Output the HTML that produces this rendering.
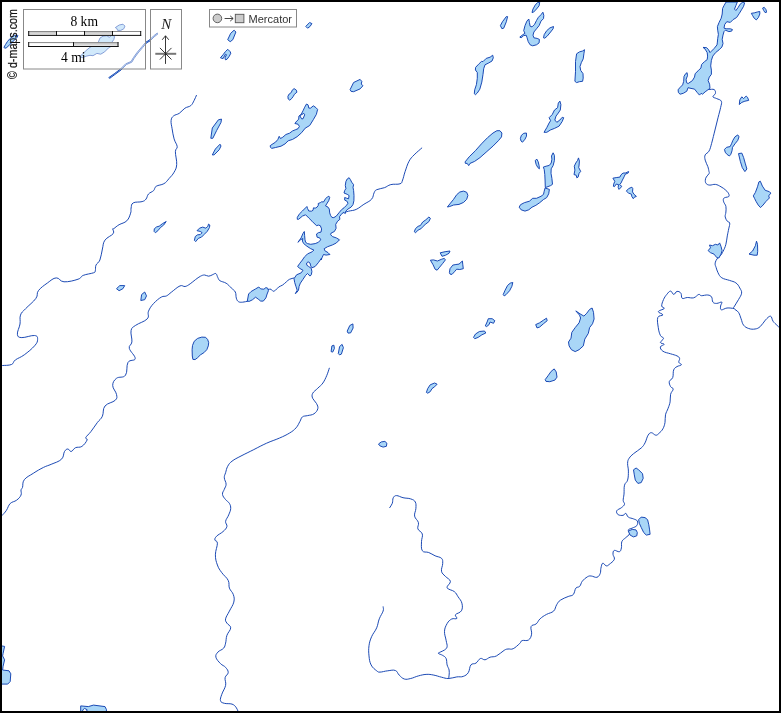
<!DOCTYPE html>
<html><head><meta charset="utf-8"><title>d-maps</title>
<style>
html,body{margin:0;padding:0;background:#fff;}
body{width:781px;height:713px;overflow:hidden;position:relative;}
svg{will-change:transform;position:absolute;left:0;top:0;display:block;}
</style></head><body>
<svg width="781" height="713" viewBox="0 0 781 713">
<rect x="0" y="0" width="781" height="713" fill="#fff"/>
<g fill="none" stroke="#1040b0" stroke-width="0.95" stroke-linejoin="round" stroke-linecap="round">
<path d="M196.4 95.4 C195.9 96.4 195.2 98.5 194.1 100.5 C193.0 102.5 192.6 104.1 190.8 105.6 C189.0 107.1 187.2 106.7 184.9 108.2 C182.6 109.7 181.6 111.8 179.3 113.3 C177.0 114.8 175.2 114.5 173.6 115.9 C172.0 117.3 171.4 117.9 171.1 120.5 C170.8 123.1 171.5 125.0 172.1 128.7 C172.7 132.4 173.1 135.3 174.1 138.9 C175.1 142.5 176.9 144.0 177.2 146.6 C177.5 149.2 175.5 148.1 175.4 151.7 C175.3 155.3 177.0 160.4 176.7 164.5 C176.4 168.6 175.6 169.4 174.1 172.2 C172.6 175.0 171.0 176.3 169 178.6 C167.0 180.9 166.5 182.2 163.9 183.7 C161.3 185.2 158.3 184.9 156.2 186.3 C154.1 187.7 155.1 189.1 153.6 190.6 C152.1 192.1 150.0 192.3 148.5 194 C147.0 195.7 147.3 197.6 146 199.1 C144.7 200.6 144.7 200.8 142.1 201.6 C139.5 202.4 135.4 201.6 133.2 202.9 C131.0 204.2 131.6 205.9 131.1 208 C130.6 210.1 131.5 210.6 130.6 213.2 C129.7 215.8 129.1 218.5 126.8 220.8 C124.5 223.1 121.7 223.2 119.1 224.7 C116.5 226.2 115.3 227.6 114 228.5 C112.7 229.4 112.9 228.0 112.7 229 C112.5 230.0 114.7 231.4 113.2 233.6 C111.7 235.8 107.2 237.0 105 240.1 C102.8 243.2 103.4 245.0 102.4 249 C101.4 253.0 101.2 256.8 99.9 260 C98.6 263.2 96.9 262.9 96 265.1 C95.1 267.3 95.8 269.3 95.3 270.8 C94.8 272.3 95.9 271.9 93.5 272.8 C91.1 273.7 86.3 274.1 83.2 275.4 C80.1 276.7 81.9 277.9 78.1 279.2 C74.3 280.5 68.4 282.1 64 281.8 C59.6 281.5 59.6 277.7 56.3 277.9 C53.0 278.1 51.0 280.4 47.4 283 C43.8 285.6 40.7 287.6 38.4 290.7 C36.1 293.8 38.5 294.8 35.9 298.4 C33.3 302.0 28.7 305.4 25.6 308.7 C22.5 312.0 21.6 312.0 20.5 315.1 C19.4 318.2 20.6 320.2 20 324 C19.4 327.8 17.0 331.6 17.4 334.3 C17.8 337.0 18.4 337.4 21.8 337.6 C25.2 337.8 31.4 335.1 34.6 335.5 C37.8 335.9 37.6 337.3 37.6 339.4 C37.6 341.5 37.3 342.7 34.6 345.8 C31.9 348.9 28.1 352.0 24.3 354.8 C20.5 357.6 18.0 358.0 15.4 359.9 C12.8 361.8 14.1 363.4 11.5 364.5 C8.9 365.6 4.4 365.3 2.6 365.5"/>
<path d="M247.6 301.2 C246.6 301.4 244.3 302.1 242.5 302.2 C240.7 302.3 239.6 302.4 238.4 301.6 C237.2 300.8 236.9 300.0 236.3 298.1 C235.7 296.2 236.3 294.0 235.3 292 C234.3 290.0 233.0 289.7 231.2 287.9 C229.4 286.1 228.4 284.6 226.1 283.2 C223.8 281.8 221.5 281.8 219.9 280.7 C218.3 279.6 218.7 279.1 217.9 277.7 C217.1 276.3 216.9 274.2 215.9 273.6 C214.9 273.0 214.2 274.1 212.8 274.6 C211.4 275.1 210.3 276.1 208.7 276.2 C207.1 276.3 206.2 275.0 204.6 275 C203.0 275.0 202.3 275.3 200.5 276.2 C198.7 277.1 197.5 278.2 195.4 279.7 C193.3 281.2 192.3 282.4 190.2 283.8 C188.1 285.2 187.1 286.1 185.1 286.5 C183.1 286.9 182.7 284.8 180 285.9 C177.3 287.0 174.3 290.0 171.6 292 C168.9 294.0 168.6 294.9 166.5 295.9 C164.4 296.9 163.9 295.6 161.3 297.1 C158.7 298.6 156.2 300.7 153.6 303.5 C151.0 306.3 149.8 308.1 148.5 311.2 C147.2 314.3 149.8 316.1 147.2 318.9 C144.6 321.7 138.9 323.0 135.7 325.3 C132.5 327.6 131.9 327.1 131.1 330.4 C130.3 333.7 132.3 338.3 131.9 341.9 C131.5 345.5 128.6 345.0 129.3 348.3 C130.0 351.6 135.5 355.8 135.2 358.6 C134.9 361.4 129.9 359.1 128 362.4 C126.1 365.7 127.8 372.0 125.5 375.2 C123.2 378.4 119.1 376.2 116.5 378.3 C113.9 380.4 112.7 382.3 112.7 385.5 C112.7 388.7 116.0 391.4 116.5 394.4 C117.0 397.4 117.5 398.0 115.2 400.3 C112.9 402.6 107.6 402.8 105 406 C102.4 409.2 103.9 412.9 102.4 416.2 C100.9 419.5 99.6 419.5 97.3 422.6 C95.0 425.7 93.2 428.6 90.9 431.6 C88.6 434.6 86.6 435.8 85.8 437.5 C85.0 439.2 87.9 438.2 87.1 440 C86.3 441.8 84.2 444.9 81.9 446.4 C79.6 447.9 77.6 446.7 75.5 447.7 C73.4 448.7 72.7 451.2 71.2 451.5 C69.7 451.8 69.2 449.0 67.9 449 C66.6 449.0 65.8 449.5 64.5 451.5 C63.2 453.5 64.2 456.6 61.5 459.2 C58.8 461.8 54.8 462.7 51.2 464.3 C47.6 465.9 47.1 465.6 43.5 467.4 C39.9 469.2 37.1 470.8 33.3 473.3 C29.5 475.8 26.5 476.9 24.3 479.7 C22.1 482.5 23.2 485.4 22.5 487.4 C21.8 489.4 21.3 488.4 21 489.9 C20.7 491.4 21.9 493.0 21 495.1 C20.1 497.2 18.8 498.5 16.6 500.2 C14.4 501.9 12.2 501.5 10.2 503.5 C8.2 505.5 8.0 508.0 6.4 510.4 C4.8 512.8 2.9 514.5 2 515.5"/>
<path d="M268.4 289.5 C268.9 289.4 270.1 288.9 271 289.2 C271.9 289.5 272.0 291.0 272.9 291.2 C273.8 291.4 274.3 291.0 275.5 290.2 C276.7 289.4 277.3 288.0 278.7 287 C280.1 286.0 281.0 286.1 282.5 285.1 C284.0 284.1 284.9 283.1 286.3 281.9 C287.7 280.7 288.0 280.1 289.5 279.3 C291.0 278.5 293.1 278.3 294 278"/>
<path d="M341.4 213.3 C342.8 212.9 345.5 212.0 348.5 211.2 C351.5 210.4 353.1 210.8 356.2 209.4 C359.3 208.0 360.8 206.3 363.9 204.3 C367.0 202.3 369.6 201.5 371.6 199.2 C373.6 196.9 373.1 194.7 374.1 192.8 C375.1 190.9 374.6 190.7 376.7 189.7 C378.8 188.7 381.6 188.7 384.4 187.7 C387.2 186.7 387.7 185.4 390.8 184.6 C393.9 183.8 397.6 184.7 400 183.8 C402.4 182.9 401.6 182.4 402.6 180 C403.6 177.6 403.8 175.3 405.1 171.6 C406.4 167.9 407.2 164.6 409 161.3 C410.8 158.0 411.5 157.6 414.1 154.9 C416.7 152.2 420.3 149.4 421.8 148"/>
<path d="M329.3 368.2 C328.8 369.6 328.1 372.4 326.8 375.4 C325.5 378.4 324.7 380.4 322.9 383 C321.1 385.6 319.8 386.1 317.8 388.2 C315.8 390.3 313.7 391.3 312.7 393.3 C311.7 395.3 311.9 396.4 312.7 398.4 C313.5 400.4 315.5 401.4 316.5 403.5 C317.5 405.6 318.3 406.6 317.8 408.7 C317.3 410.8 316.0 412.4 314 413.8 C312.0 415.2 309.9 415.0 307.6 415.6 C305.3 416.2 303.9 415.7 302.4 416.9 C300.9 418.1 301.2 419.3 299.9 421.5 C298.6 423.7 298.1 425.6 296 427.9 C293.9 430.2 292.9 431.0 289.6 433 C286.3 435.0 284.0 436.1 279.4 438.1 C274.8 440.1 271.7 440.9 266.6 443.2 C261.5 445.5 258.9 447.0 253.8 449.6 C248.7 452.2 245.4 453.7 241 456 C236.6 458.3 234.7 459.1 232 461.2 C229.3 463.3 229.0 464.0 227.7 466.3 C226.4 468.6 226.3 470.4 225.6 472.7 C224.9 475.0 224.2 475.5 224.3 477.8 C224.4 480.1 226.1 481.9 226.1 484.2 C226.1 486.5 225.0 487.3 224.3 489.3 C223.6 491.3 222.2 492.3 222.5 494.4 C222.8 496.5 224.2 497.8 225.6 499.6 C227.0 501.4 228.4 501.6 229.4 503.4 C230.4 505.2 230.8 506.2 230.7 508.5 C230.6 510.8 229.7 512.3 228.7 514.9 C227.7 517.5 226.0 519.0 225.6 521.3 C225.2 523.6 227.4 524.4 226.9 526.5 C226.4 528.6 225.1 529.7 223 531.6 C220.9 533.5 218.2 534.5 216.6 536.2 C215.0 537.9 214.7 538.6 214.9 540 C215.1 541.4 217.3 540.2 217.4 543.2 C217.5 546.2 215.4 550.4 215.4 554.8 C215.4 559.2 216.1 561.4 217.4 565 C218.7 568.6 219.6 569.6 221.8 572.7 C224.0 575.8 226.7 577.3 228.2 580.4 C229.7 583.5 228.4 585.3 229.4 588.1 C230.4 590.9 232.4 591.7 233.3 594.5 C234.2 597.3 234.6 598.8 233.8 602.1 C233.0 605.4 231.0 607.8 229.4 611.1 C227.8 614.4 226.1 616.4 225.6 618.8 C225.1 621.2 225.9 621.3 226.9 623.1 C227.9 624.9 230.7 625.3 230.7 627.8 C230.7 630.3 227.9 632.3 226.9 635.4 C225.9 638.5 226.3 640.5 225.6 643.1 C224.9 645.7 225.1 646.4 223.6 648.2 C222.1 650.0 219.4 650.3 217.9 652.1 C216.4 653.9 215.4 654.9 215.9 657.2 C216.4 659.5 218.6 661.6 220.5 663.6 C222.4 665.6 224.1 665.6 225.6 667.4 C227.1 669.2 228.3 670.5 228.2 672.6 C228.1 674.7 225.6 675.1 225.1 677.7 C224.6 680.3 226.3 682.1 225.6 685.4 C224.9 688.7 222.8 691.2 221.8 694.3 C220.8 697.4 220.0 698.9 220.5 700.7 C221.0 702.5 222.0 702.6 224.3 703.3 C226.6 704.0 229.7 703.3 232 704.1 C234.3 704.9 234.7 705.7 235.9 707.1 C237.1 708.5 237.5 710.2 237.9 711"/>
<path d="M389.7 507.6 C390.2 506.7 391.6 505.3 392.3 503.3 C393.0 501.3 392.4 499.2 393.3 497.7 C394.2 496.2 394.7 495.6 396.6 495.6 C398.5 495.6 400.2 497.0 403 497.7 C405.8 498.4 408.2 498.0 410.7 498.9 C413.2 499.8 414.3 500.1 415.3 502 C416.3 503.9 416.0 505.6 415.9 508.4 C415.8 511.2 414.1 513.3 414.6 516.1 C415.1 518.9 417.7 519.9 418.4 522.5 C419.1 525.1 417.1 526.6 417.9 528.9 C418.7 531.2 421.6 531.4 422.3 534 C423.0 536.6 421.5 538.4 421.5 541.7 C421.5 545.0 420.9 548.5 422.3 550.7 C423.7 552.9 426.1 551.5 428.7 552.5 C431.3 553.5 432.5 554.6 435.1 555.8 C437.7 557.0 440.0 556.8 441.5 558.3 C443.0 559.8 442.7 560.9 442.7 563.5 C442.7 566.1 441.0 568.6 441.5 571.2 C442.0 573.8 443.5 574.3 445.3 576.3 C447.1 578.3 450.0 579.1 450.4 581.4 C450.8 583.7 446.3 585.8 447.1 587.8 C447.9 589.8 452.1 589.8 454.3 591.6 C456.5 593.4 456.6 594.5 458.1 596.8 C459.6 599.1 461.2 600.4 461.9 603.2 C462.6 606.0 462.7 608.5 461.4 610.8 C460.1 613.1 456.4 613.2 455.5 614.7 C454.6 616.2 457.6 617.6 456.8 618.5 C456.0 619.4 453.6 618.0 451.7 619 C449.8 620.0 448.5 621.1 447.1 623.6 C445.7 626.1 444.7 628.0 444.5 631.3 C444.3 634.6 445.6 637.2 446.1 640.3 C446.6 643.4 447.4 644.8 447.1 646.7 C446.8 648.6 445.9 648.9 444.5 650 C443.1 651.1 441.4 651.4 440.2 652.1 C439.0 652.8 437.9 652.7 438.4 653.4 C438.9 654.1 441.2 654.4 442.7 655.4 C444.2 656.4 445.2 656.6 446.1 658.5 C447.0 660.4 446.5 662.6 447.1 664.9 C447.7 667.2 448.7 668.0 449.1 670 C449.5 672.0 449.2 673.4 449.1 675.1 C449.0 676.8 448.7 677.8 448.6 678.5"/>
<path d="M383.1 606.8 C383.1 607.7 383.9 608.7 383.1 611.1 C382.3 613.5 380.6 615.5 379.3 618.8 C378.0 622.1 378.2 624.2 376.7 627.8 C375.2 631.4 373.1 633.1 371.6 636.7 C370.1 640.3 369.5 641.9 369 645.7 C368.5 649.5 368.6 652.1 369 655.9 C369.4 659.7 369.6 661.9 371.1 664.9 C372.6 667.9 374.9 669.4 376.7 670.8 C378.5 672.2 377.8 672.1 380 672.1 C382.2 672.1 384.6 671.1 387.7 670.8 C390.8 670.5 393.1 669.6 395.4 670.5 C397.7 671.4 397.4 673.4 399.2 675.1 C401.0 676.8 402.0 678.3 404.3 679 C406.6 679.7 407.9 679.1 410.7 678.5 C413.5 677.9 415.3 676.7 418.4 675.9 C421.5 675.1 423.0 674.6 426.1 674.4 C429.2 674.2 430.7 674.5 433.8 675.1 C436.9 675.7 438.5 676.5 441.5 677.2 C444.5 677.9 445.5 678.6 448.6 678.5 C451.7 678.4 453.9 677.3 456.8 676.9 C459.7 676.5 460.9 677.3 463.2 676.4 C465.5 675.5 466.8 674.9 468.3 672.6 C469.8 670.3 469.4 666.8 470.9 664.9 C472.4 663.0 474.1 664.4 476 663.1 C477.9 661.8 478.6 659.2 480.4 658.5 C482.2 657.8 483.1 660.1 485 659.8 C486.9 659.5 487.8 658.0 490.1 657.2 C492.4 656.4 493.7 657.3 496.5 655.9 C499.3 654.5 501.9 651.7 504.2 650.3 C506.5 648.9 506.2 649.3 508 649 C509.8 648.7 510.9 649.8 513.2 648.7 C515.5 647.6 517.8 645.2 519.6 643.6 C521.4 642.0 520.3 641.3 522.1 640.6 C523.9 639.9 526.6 641.3 528.5 640 C530.4 638.7 531.1 636.9 531.6 634.2 C532.1 631.5 530.2 628.6 531.1 626.5 C532.0 624.4 534.4 625.4 536.2 623.9 C538.0 622.4 538.0 620.7 540.1 618.8 C542.2 616.9 543.8 615.9 546.5 614.4 C549.2 612.9 551.6 613.0 553.6 611.1 C555.6 609.2 555.3 606.9 556.7 604.7 C558.1 602.5 558.2 601.7 560.5 600.1 C562.8 598.5 565.6 597.6 568.2 596.5 C570.8 595.4 571.8 596.2 573.3 594.5 C574.8 592.8 574.6 589.7 575.9 588.1 C577.2 586.5 578.4 587.7 579.7 586.3 C581.0 584.9 580.8 583.1 582.3 581.2 C583.8 579.3 585.6 577.8 587.4 576.8 C589.2 575.8 589.3 575.9 591.2 576 C593.1 576.1 595.1 577.8 596.9 577.3 C598.7 576.8 599.4 575.3 600.2 573.5 C601.0 571.7 600.4 570.4 600.9 568.3 C601.4 566.2 601.7 563.7 602.7 563.2 C603.7 562.7 604.8 565.5 606.1 565.8 C607.4 566.1 607.5 565.8 609.1 564.5 C610.7 563.2 613.5 561.4 614.3 559.4 C615.1 557.4 613.0 556.1 613 554.3 C613.0 552.5 613.0 550.9 614.3 550.4 C615.6 549.9 618.0 552.2 619.4 551.7 C620.8 551.2 620.9 549.9 621.4 547.9 C621.9 545.9 621.0 543.6 621.9 541.5 C622.8 539.4 624.3 539.1 625.8 537.6 C627.3 536.1 629.1 535.3 629.6 533.8 C630.1 532.3 627.8 531.0 628.3 529.9 C628.8 528.8 630.5 529.0 632.2 528.1 C633.9 527.2 635.8 527.0 636.8 525.6 C637.8 524.2 638.0 522.3 637.3 521 C636.6 519.7 635.3 519.7 633.5 518.9 C631.7 518.1 629.8 518.2 628.3 517.1 C626.8 516.0 626.8 513.7 625.8 513.3 C624.8 512.9 624.7 515.0 623.2 515.3 C621.7 515.6 619.4 515.5 618.1 514.6 C616.8 513.7 616.1 512.1 616.8 510.7 C617.5 509.3 619.9 509.0 621.4 507.7 C622.9 506.4 624.1 505.7 624.5 504.3 C624.9 502.9 623.3 502.5 623.2 500.5 C623.1 498.5 623.7 497.2 624 494.1 C624.3 491.0 623.8 488.0 624.5 485.2 C625.2 482.4 626.8 482.9 627.6 480.1 C628.4 477.3 628.4 474.4 628.4 471.1 C628.4 467.8 627.5 466.0 627.6 463.4 C627.7 460.8 627.9 460.2 629.1 458.3 C630.3 456.4 631.1 455.8 633.5 453.7 C635.9 451.6 638.9 450.2 641.2 448 C643.5 445.8 643.6 445.5 645 442.9 C646.4 440.3 646.8 437.2 648.1 435.2 C649.4 433.2 649.9 432.7 651.4 432.7 C652.9 432.7 654.3 435.1 655.8 435.2 C657.3 435.3 657.7 434.5 659.1 433.2 C660.5 431.9 661.7 431.0 662.9 428.8 C664.1 426.6 664.5 425.2 665 422.4 C665.5 419.6 664.9 417.6 665.5 414.8 C666.1 412.0 667.2 410.9 668.1 408.3 C669.0 405.7 669.6 404.7 670.1 401.9 C670.6 399.1 670.0 396.9 670.6 394.3 C671.2 391.7 673.2 390.6 673.2 389.1 C673.2 387.6 671.4 388.1 670.6 386.6 C669.8 385.1 668.9 383.3 669.3 381.5 C669.7 379.7 671.8 379.9 672.7 377.6 C673.6 375.3 672.8 372.1 673.7 369.9 C674.6 367.7 675.5 367.6 677 366.6 C678.5 365.6 681.0 365.7 681.4 364.8 C681.8 363.9 679.2 363.6 678.8 362.3 C678.4 361.0 680.0 359.7 679.6 358.4 C679.2 357.1 678.8 356.8 677 355.9 C675.2 355.0 673.4 354.7 670.6 353.8 C667.8 352.9 664.9 352.6 662.9 351.2 C660.9 349.8 660.1 348.3 660.4 346.9 C660.7 345.5 664.2 345.2 664.2 344.3 C664.2 343.4 660.5 343.7 660.4 342.5 C660.3 341.3 663.5 339.8 663.5 338.4 C663.5 337.0 661.4 337.5 660.4 335.4 C659.4 333.3 658.8 331.3 658.3 327.7 C657.8 324.1 656.9 320.1 657.8 317.5 C658.7 314.9 662.8 316.1 662.9 314.9 C663.0 313.7 658.0 312.9 658.3 311.6 C658.6 310.3 663.5 309.6 664.2 308.5 C664.9 307.4 661.8 307.8 661.7 306 C661.6 304.2 662.5 301.9 663.5 299.6 C664.5 297.3 665.4 296.1 666.8 294.4 C668.2 292.7 669.2 291.1 670.6 291.1 C672.0 291.1 672.4 294.3 673.7 294.4 C675.0 294.5 675.6 291.6 677 291.4 C678.4 291.2 679.9 291.8 680.9 293.2 C681.9 294.6 680.9 297.4 682.2 298.3 C683.5 299.2 685.0 297.6 687.3 297.5 C689.6 297.4 691.4 298.4 693.7 297.8 C696.0 297.2 697.3 294.8 698.8 294.4 C700.3 294.0 699.6 295.6 701.4 295.7 C703.2 295.8 705.8 294.7 707.8 295 C709.8 295.3 710.6 295.6 711.6 297 C712.6 298.4 711.9 300.8 712.9 302.1 C713.9 303.4 714.9 303.4 716.7 303.4 C718.5 303.4 721.0 301.6 721.8 302.1 C722.6 302.6 720.7 304.5 720.6 306 C720.5 307.5 720.0 309.4 721.3 309.8 C722.6 310.2 724.5 308.3 727 308 C729.5 307.7 732.5 308.4 733.9 308.5"/>
<path d="M709 89.6 C710.0 89.6 712.9 88.8 714.2 89.6 C715.5 90.4 715.7 92.1 715.4 93.5 C715.1 94.9 712.6 95.8 712.9 96.8 C713.2 97.8 715.0 97.7 716.7 98.6 C718.4 99.5 720.5 99.4 721.3 101.2 C722.1 103.0 721.3 104.3 720.6 107.6 C719.9 110.9 719.3 112.7 718 117.8 C716.7 122.9 715.5 128.1 714.2 133.2 C712.9 138.3 712.6 139.8 711.6 143.4 C710.6 147.0 710.3 148.8 709 151.1 C707.7 153.4 706.0 153.1 705.2 154.9 C704.4 156.7 704.7 157.8 705.2 160.1 C705.7 162.4 707.0 164.2 707.8 166.5 C708.6 168.8 708.7 170.2 709 171.6 C709.3 173.0 709.6 172.4 709.1 173.5 C708.6 174.6 707.1 175.6 706.3 177 C705.5 178.4 705.3 179.2 705.3 180.5 C705.3 181.8 705.4 182.8 706.3 183.7 C707.2 184.6 708.0 185.0 709.8 185.1 C711.6 185.2 713.2 184.1 715.4 184.4 C717.6 184.7 718.9 185.6 721 186.8 C723.1 188.0 724.4 188.9 725.9 190.3 C727.4 191.7 728.1 192.5 728.7 193.8 C729.3 195.1 729.3 195.9 728.7 196.6 C728.1 197.3 726.9 196.9 725.9 197.3 C724.9 197.7 723.9 197.7 723.5 198.7 C723.1 199.7 723.3 200.7 723.8 202.2 C724.3 203.7 725.5 204.4 725.9 206.4 C726.3 208.4 726.0 209.9 725.9 212 C725.8 214.1 724.9 215.1 725.2 216.9 C725.5 218.7 726.4 220.0 727.3 221.2 C728.2 222.4 729.4 221.5 729.7 223 C730.0 224.5 729.2 226.3 728.7 228.9 C728.2 231.5 727.9 232.8 727.3 235.9 C726.7 239.0 726.7 241.2 725.9 244.3 C725.1 247.4 724.1 249.2 723.1 251.3 C722.1 253.4 722.0 253.5 721 254.8 C720.0 256.1 719.2 256.5 718.2 257.6 C717.2 258.7 716.7 259.1 716.1 260.4 C715.5 261.7 715.1 262.5 715.1 263.9 C715.1 265.3 715.5 265.6 716.1 267.4 C716.7 269.2 716.9 270.6 718 272.7 C719.1 274.8 719.5 276.3 721.8 277.8 C724.1 279.3 726.7 279.4 729.5 280.4 C732.3 281.4 733.8 281.4 735.9 282.9 C738.0 284.4 738.7 285.9 739.8 288 C740.9 290.1 741.9 290.9 741.6 293.2 C741.3 295.5 739.9 297.0 738.5 299.6 C737.1 302.2 735.5 304.2 734.6 306 C733.7 307.8 733.1 307.2 733.9 308.5 C734.7 309.8 737.1 310.3 738.5 312.4 C739.9 314.5 740.1 316.2 741.1 318.8 C742.1 321.4 742.1 323.3 743.6 325.2 C745.1 327.1 746.4 327.7 748.7 328.5 C751.0 329.3 752.8 329.4 755.1 329 C757.4 328.6 758.2 328.3 760.3 326.5 C762.4 324.7 763.4 322.2 765.4 320.1 C767.4 318.0 769.0 316.0 770.5 316.2 C772.0 316.4 771.8 319.5 773.1 321.3 C774.4 323.1 775.6 323.9 776.9 325.2 C778.2 326.5 779.0 327.2 779.5 327.7"/>
</g>
<g fill="#a9d6f7" stroke="#1040b0" stroke-width="0.95" stroke-linejoin="round">
<path d="M116.5 288.7 L119.8 285.6 L124.7 285.6 L122.9 288.7 L119.1 290.7Z"/>
<path d="M140.8 300.5 L141.6 294.6 L144.7 292 L146.5 295.9 L144.7 299.7Z"/>
<path d="M0 645.7 L4.6 646.4 L3.1 653.4 L2.6 655.9 L4.6 659.8 L3.1 666.2 L2.6 670 L9 670.8 L10.8 673.8 L10.2 681.5 L7.7 684.1 L0 684.1Z"/>
<path d="M80.7 712.3 L80.7 705.9 L88.3 706.6 L93.5 705.1 L105 706.6 L106.5 709.7 L106.3 712.3Z"/>
<path d="M234.1 30.2 L235.9 32 L232.8 39.7 L230.2 41.7 L227.7 39.7 L230.7 33.3Z"/>
<path d="M220.4 57.8 L223.1 54.7 L225.4 51.6 L227.8 49.3 L230.1 51.6 L230.8 53.2 L229.3 56.2 L227 59.3 L225.4 59.8 L225 57.8 L226.5 54.7 L225.4 54.2 L223.1 58.6Z"/>
<path d="M305.8 26.4 L309.6 22.5 L311.9 23.6 L310.1 26.4 L307.6 28.2Z"/>
<path d="M350.1 89.6 L353.6 82.5 L360.1 79.4 L361.8 81.4 L361.3 84 L362.9 85.8 L360.1 88.9 L353.6 91.7 L351.1 91.4Z"/>
<path d="M287.9 96.3 L289.2 94 L291.3 92.5 L292.2 90.2 L294.1 88.6 L296.4 90.2 L296.9 92.2 L294.4 94.3 L293.3 96.3 L291.8 98.4 L289.8 100.2 L288.2 99Z"/>
<path d="M270.2 145.7 L272 144.4 L275.6 142.1 L277.9 139.4 L279.2 136.3 L280.5 138.5 L282.8 137.2 L285.9 134.5 L289.5 133.2 L292.6 130.9 L295.8 129.6 L298 128.7 L299.4 126.4 L298 124.2 L294.9 123.5 L296.7 121.1 L298.7 119.3 L298.9 116.1 L301.2 114.3 L303 110.8 L304.7 107.2 L306.5 104 L308.1 104.9 L308.8 108.1 L310.6 108.1 L313.3 105.8 L315.9 107.6 L317.6 109.4 L316.4 114.3 L313.3 119.7 L309.7 125.5 L305.2 128.2 L301.6 132.7 L297.1 136.7 L292.6 139.4 L288.2 140.8 L285 143.9 L281 146.2 L275.6 147.5 L271.6 148.4 L270.4 147.1Z"/>
<path d="M210.8 138.3 L212.3 128 L218.4 119.8 L221.5 119.1 L221 122.4 L216.6 130.6 L212.8 138.3Z"/>
<path d="M212.3 154.9 L215.4 149 L220 144.2 L221 146 L219.2 149.8 L214.1 154.9Z"/>
<path d="M349.1 177.7 L350.4 179.6 L351.7 182.2 L353.6 184.7 L353 187.3 L353.6 190.5 L354 195.6 L353.9 200.7 L353 204.6 L351.1 207.1 L347.9 209.1 L345.9 211 L345.3 213.5 L343.4 212.3 L341.5 214.2 L339.5 216.7 L339.9 219.3 L337.6 221.2 L335.7 224.4 L336.1 228.3 L334.4 231.5 L331.2 233 L330.6 234.7 L332.5 236.6 L336.3 237.9 L339.5 239.8 L336.3 243 L332.5 244.9 L327.4 246.8 L324.2 248.7 L324.8 250.7 L328 252.6 L329.9 254.5 L326.1 255.1 L323.5 254.5 L322.3 257.1 L321 260 L321.5 258.2 L318.3 262.7 L315.1 266.5 L311.9 267.8 L310.7 265.9 L310 263 L308.1 261.8 L306.6 263 L306.8 265.2 L308.7 266.5 L311.3 268.4 L311.9 271.6 L311.3 274.8 L310 276.1 L307.5 273.5 L305.5 275.5 L303 279.3 L300.4 283.1 L299.1 286.3 L298.5 290.2 L296.6 292.7 L295.3 293.6 L297.2 290.2 L295.9 286.3 L294.7 282.5 L294 278.7 L296.6 274.8 L301.1 272.9 L303 270.3 L299.8 268.4 L297.6 266.5 L299.8 263.3 L302.4 260 L304.3 257.1 L307.5 253.9 L312 251.9 L313.9 250 L310.7 248.7 L306.9 246.2 L303.7 243.6 L302.4 241.1 L302.8 238.5 L300.5 239.8 L297.9 242.3 L301.1 237.9 L303 233.4 L304.3 231.5 L304.6 235.3 L305 239.8 L305.6 242.3 L307.5 243.6 L310.7 244.3 L315.2 243.6 L318.4 242.3 L320.7 239.8 L319.7 237.9 L317.1 237.2 L316.5 234 L318.4 232.7 L321 232.1 L321.6 228.9 L320.3 225.7 L318.4 225.1 L316.5 225.7 L312 221.2 L308.8 218 L305.6 214.8 L302.4 216.1 L298.6 219.3 L297.3 219.3 L297.3 217.4 L299.2 214.2 L302.4 211 L305.6 207.8 L306.9 206.5 L307.5 208.4 L308.8 211 L311.4 211.2 L313 210.3 L313.5 207.8 L315.2 208.2 L317.1 207.1 L318.4 205.2 L318.2 203.5 L320.3 202.7 L321.6 201.8 L323.5 202 L325.5 198.8 L327.4 196.9 L328.9 196.2 L329.7 197.5 L328.7 200.7 L326.7 203.9 L325.5 205.9 L328 207.1 L329.3 209.1 L329.7 212.9 L330.6 215.5 L331.9 217.4 L333.8 217.6 L336.3 216.1 L338.9 212.9 L341.5 209.7 L344 207.8 L346.6 205.2 L347.9 203.3 L347.2 201.4 L344.7 200.1 L344.7 197.5 L346.6 198.2 L348.5 198.8 L349.1 195.6 L347.2 194.3 L344 193 L344.7 190.5 L345.9 188.6 L345.3 185.4 L345.9 181.5 L347.2 179Z"/>
<path d="M247.3 301.1 L248.6 294 L251.1 291.5 L255.6 288.9 L258.8 287 L260.7 288.9 L263.9 289.2 L265.9 287.6 L267.8 288.3 L268.4 290.8 L267.1 294 L265.9 297.9 L263.3 301.1 L260.7 301.1 L258.2 299.1 L255.6 297.2 L252.4 299.8 L249.2 301.4Z"/>
<path d="M347.2 331.1 L349.8 325.5 L352.9 323.9 L353.1 328 L350.6 332.9 L348 333.1Z"/>
<path d="M331.1 351.6 L331.9 345.9 L333.9 345.2 L334.4 348.5 L332.7 352.1Z"/>
<path d="M338.3 353.6 L339.6 346.5 L342.1 344.4 L343.4 347.7 L341.4 354.1 L339.6 354.9Z"/>
<path d="M192.9 359.4 L192.3 356 L192.1 349.7 L192.5 345.5 L194.2 341.3 L197.6 338.4 L201.8 337.1 L205.6 337.3 L207.7 339.6 L208.7 342.6 L208.3 345.9 L206.8 349.7 L203.9 352.7 L200.5 354.8 L197.6 357.7 L195.1 359.6Z"/>
<path d="M154.1 231.4 L154.3 228.8 L156.6 226.9 L159.2 226.2 L162.4 223.7 L166.2 221.5 L163.7 225 L160.5 227.5 L157.9 230.7 L155.4 232.7Z"/>
<path d="M194.4 240.3 L195.3 236.5 L197.6 234.8 L200.2 234.6 L202.1 232.7 L200.2 231.4 L197 230.7 L199.5 228.2 L202.7 227.1 L205.9 228.2 L207.9 226.2 L208.5 224.1 L209.8 225 L209.5 227.5 L207.2 231.4 L204 234.6 L201.5 237.1 L198.3 238.4 L195.7 241.6Z"/>
<path d="M4 47.2 L5.5 44.6 L7.3 41.7 L9.5 39.1 L12 36.9 L14.6 35.5 L17.2 35 L17.9 35.8 L16.8 37.7 L14.6 39.9 L11.7 42.8 L8.8 45.7 L6.2 47.9 L4.7 48.2Z"/>
<path d="M80 56.5 L85.4 51.1 L90 47.3 L94.6 45 L98.4 41.9 L100 38 L103 36.2 L106.9 35.7 L109.2 37.3 L112.3 35 L114.6 36.5 L113.8 39.6 L111.5 42.7 L112.3 45.7 L108.4 48 L104.6 51.9 L100.7 54.2 L96.9 53.4 L93 55.7 L90 55.3 L86.1 56.2 L82.3 57.7Z"/>
<path d="M115.3 27.6 L119.2 25 L123 24.2 L124.9 26.1 L123.8 28.8 L120.7 30.4 L117.6 30.4 L116.9 28.5Z"/>
<path d="M108.8 77.6 L114.2 73.8 L120.3 69.2 L125.7 63.8 L131.1 61.5 L133.4 57.6 L137.2 52.3 L141.8 46.9 L145.7 42.3 L149.5 40 L153.4 36.1 L157.2 33.1 L158 33.8 L154.1 36.9 L150.3 40.7 L146.4 43 L142.6 47.6 L138 53 L134.1 58.4 L131.8 62.2 L126.5 64.5 L121.1 69.9 L114.9 74.5 L109.6 78.4Z"/>
<path d="M532 12.5 L533 9 L535.2 5.1 L537.8 2.3 L539.7 2.3 L539.1 5.8 L536.5 9 L533.5 12.2Z"/>
<path d="M519.8 37.1 L523 34.6 L525 33.3 L523.7 30.7 L525 25.6 L526.9 21.1 L528.8 19 L529.4 22.4 L530.1 26.2 L532 26.9 L534.6 24.3 L536.5 20.5 L538.4 17.3 L541 14.7 L542.9 12.2 L543.8 15.4 L543.5 18.6 L541 21.1 L539.1 25.6 L536.5 28.8 L533.9 32 L533 35.2 L533.9 37.8 L537.1 38.4 L539.4 39.4 L539.1 42.9 L536.5 44.8 L532.7 45.8 L530.1 44.8 L528.2 41.6 L527.1 37.8 L526.2 35.2 L523.7 35.6 L521.1 37.8Z"/>
<path d="M543.5 37.8 L544.2 34.6 L546.7 30.7 L549.9 27.9 L553.5 26.5 L553.1 28.8 L550.6 32 L547.4 35.9 L544.8 38.2Z"/>
<path d="M574.9 81.3 L575.5 71.7 L575.5 61.5 L576.6 53.8 L579.4 51.9 L582.6 51 L584.5 49.7 L583.9 53.8 L583.2 58.9 L581.3 62.7 L580 66.6 L580.7 70.4 L583 73.6 L583.2 78.1 L582.6 81.3 L579.4 81.7 L576.6 82.6Z"/>
<path d="M500.4 25.6 L502.4 21.8 L506.3 16.6 L507.6 16.6 L506.3 21.8 L503.7 28.2 L501.9 28.7Z"/>
<path d="M474.3 93.7 L474.7 89.8 L476.4 84.7 L477.3 78.3 L477.3 72.5 L475.4 70 L475.6 67.4 L478.6 64.2 L481.5 61.4 L483 61.6 L486.2 58.4 L490.1 57.2 L492.7 55.2 L493.3 57.8 L492 61 L488.8 62.9 L485 64.8 L483.7 68.7 L483 74.4 L481.8 82.1 L479.8 89.2 L477.3 93 L475.4 94.7Z"/>
<path d="M544 132.3 L546.8 127.6 L549.1 123 L550.6 120.7 L549.1 117.7 L552.2 114.6 L554.5 110 L557.6 107.7 L558.3 103.1 L559.9 101.1 L560.9 104.6 L560.3 110 L558.3 113 L556 116.1 L554.8 120 L556.8 122.3 L559.9 120 L562.2 117.3 L563.7 117.7 L562.2 121.5 L559.1 126.1 L554.5 128.4 L550.6 129.9 L546.8 132.3Z"/>
<path d="M465.1 161.9 L469.2 156.8 L475.4 150.7 L481.5 143.8 L487.6 137.6 L493 133 L496.9 130.7 L499.9 130.7 L501.9 133 L501.5 136.9 L498.4 140.7 L493 146.1 L486.9 151.5 L480 157.6 L474.6 161.4 L470 163.4 L468.7 165.6 L467.2 163.4 L465.4 163.4Z"/>
<path d="M520.4 138.4 L521.4 135.3 L523.8 133.3 L526.4 133 L526.5 136.1 L525 139.2 L522.5 142.2 L521 141Z"/>
<path d="M535.2 160.5 L536.9 159.2 L538.2 161.8 L539.1 165.6 L539.4 168.8 L537.8 167.5 L536.1 164.3Z"/>
<path d="M574 174.6 L574.9 170.1 L574.3 166.2 L575.8 163 L577.5 160.5 L578.5 157.9 L579.4 161.1 L579.1 165 L578.7 167.5 L580.7 171.4 L579.1 173.3 L578.1 177.1 L576.8 177.8 L576.2 175.2Z"/>
<path d="M553.1 152.8 L554.4 155.4 L554.4 160.5 L553.1 165.6 L551.2 168.8 L551 173.3 L551.9 178.4 L552.5 184.3 L550.6 185.6 L548 186.6 L545.3 187.6 L545.1 181 L544.8 174.6 L544.2 169.4 L543.3 167.1 L546.1 166.2 L549.3 165.4 L551.2 163 L551.9 159.2 L551.5 156Z"/>
<path d="M545.1 188 L549.4 189.4 L548.7 193.8 L546.7 197.6 L543.5 199.5 L539.7 202.7 L535.9 205.3 L532 207.2 L528.8 209.8 L525 211.1 L521.1 209.8 L519.2 207.2 L520.5 204.7 L524.3 202.7 L529.4 201.2 L532.7 198.3 L536.5 198.3 L541 196.3 L543.5 194.4 L544.2 191.2Z"/>
<path d="M447.4 207 L450.5 203.1 L453.6 199.3 L456.7 194.7 L459.8 192 L463.6 191.1 L466.7 192.3 L467.9 195.4 L466.7 199.3 L463.6 202.4 L459 204.4 L453.6 205 L449.7 206.5Z"/>
<path d="M414.3 231.7 L415.5 228.6 L418.1 226.3 L420.4 225.5 L422.7 222 L425.8 219.8 L428.9 217 L430.4 218.3 L428.9 221.6 L425.8 224 L423.2 226.3 L421.2 228.6 L418.1 230.1 L415.5 232.8Z"/>
<path d="M440.2 252.8 L445.1 251.7 L450 251 L449 253.3 L445.4 255.3 L442 256.3Z"/>
<path d="M430.4 260.2 L433.5 259.9 L437.4 261 L441.2 259.4 L444.3 258.4 L445.4 259.9 L442.8 263.3 L439.7 267.1 L437.1 270.2 L435.1 269.2 L433.1 264.8Z"/>
<path d="M449.4 272.5 L450 268.7 L452.8 265.1 L455.9 264.5 L459 264.1 L462.4 261 L462.8 264.8 L463.3 268.7 L459.8 269.5 L456.7 269.2 L454.4 271.8 L452 274.4 L450 274.1Z"/>
<path d="M503.2 294.6 L505.1 290.2 L507.6 285.4 L510.3 283.1 L512.8 282.5 L511.9 286.3 L509.6 290.7 L506.1 294.6 L504.2 295.9Z"/>
<path d="M575.8 310.9 L580 313.8 L583.9 316.1 L586.8 313.2 L589.6 309.4 L592.1 308 L593.5 312.3 L594.1 319 L592.5 323.8 L589.6 327.6 L588.3 333.4 L584.8 339.1 L583.3 345.9 L579.1 349.7 L575.2 351.6 L571.4 349.7 L569.1 345.9 L568.5 342 L571 338.2 L571.8 332.4 L575.2 327.6 L579.1 322.8 L580.6 318 L579.5 315.1Z"/>
<path d="M485.3 325.9 L487.1 322 L488.3 318.7 L492.2 318.7 L494.8 320.7 L493.5 323.3 L490.1 322 L489.1 324.6 L486.6 326.6Z"/>
<path d="M473.5 337.4 L475.5 334 L479.4 331.5 L484.5 331 L485.8 333 L481.9 334.8 L478.1 337.4 L474.8 338.7Z"/>
<path d="M535.7 324.6 L539.6 322.8 L543.4 320.2 L546.5 318.2 L547.2 320.7 L543.4 323.8 L539.6 327.1 L537 327.9Z"/>
<path d="M545.2 379.6 L548 375.8 L551.1 371.4 L554.2 368.9 L556.2 371.9 L557 377.1 L554.9 380.1 L549.8 381.7 L546 381.4Z"/>
<path d="M426.4 392.4 L427.7 388.6 L430.2 384.8 L434.6 383 L437.1 384.2 L434.6 386.8 L432 388.6 L430.2 391.7 L427.7 393.2Z"/>
<path d="M378.5 444 L381.3 441.9 L384.9 441.4 L386.9 443.2 L386.4 446.3 L383.1 447.1 L379.8 445.8Z"/>
<path d="M726.1 2 L724 5.6 L722.6 8.4 L722.2 14 L721.2 18.2 L719.1 22.4 L717.4 26.6 L717.7 30.2 L718.4 34.4 L717.7 38.6 L717.4 42.1 L717 44.9 L714.2 48.4 L711.4 51.2 L710 52.6 L708.6 49.8 L706.7 47.7 L703 47.4 L705.1 49.1 L707.2 52.6 L707.6 56.1 L707.2 59.6 L704.4 61.7 L701.6 64.5 L700.9 68 L698.1 70.8 L695.2 73.6 L694.5 77.1 L692.4 80.6 L688.2 83.5 L686.5 82.7 L686.1 79.2 L687.5 75.7 L687.1 72.7 L685.7 73.6 L684 76.4 L683.7 81.3 L682.6 84.9 L679.8 87.7 L678.1 89.8 L678.4 92.6 L680.1 94.2 L683.3 93.3 L686.8 91.2 L688 87.7 L691 88.4 L694.5 89.1 L697.3 92.6 L699.5 95.1 L701.1 93.3 L702.5 94.2 L705.1 91.9 L707.9 89.8 L710 88.4 L709.6 84.2 L708.1 80.6 L709.3 77.1 L711.4 74.3 L711.4 70.1 L710.7 65.9 L711.4 60.3 L712.8 56.1 L715.6 52.6 L719.1 49.8 L721.9 47 L723 43.5 L722.2 39.3 L723 35.1 L724 31.6 L725.4 30.2 L728.9 31.6 L731.7 31.1 L732.4 29.5 L730.3 28.8 L726.1 28.8 L724 28.1 L724.7 24.5 L726.8 21.7 L730.3 22.4 L733.1 19.6 L736.6 17.5 L739.4 13.3 L741.5 9.8 L743.6 6.3 L744.6 2.8 L742.9 2 L740.1 4.2 L738 7.7 L735.9 10.5 L734.5 9.1 L735.9 5.6 L737.3 2Z"/>
<path d="M751.3 13.3 L754.2 12.9 L757.7 11.9 L759.8 11.5 L759.8 14 L758.4 17.5 L756.3 19.9 L754.2 18.2 L752.7 15.7Z"/>
<path d="M762.6 8.1 L764.2 7.3 L766.1 9.8 L766.5 12.3 L765.1 12.6 L763.7 10.5Z"/>
<path d="M739.3 104.5 L739.8 99.9 L741.8 96.8 L743.6 98.6 L746.2 96 L747.5 97.3 L748.7 100.4 L744.9 101.2 L741.8 102.4Z"/>
<path d="M724.5 149.4 L726.6 147.3 L730.1 146.6 L731.5 143.8 L732.9 140.3 L735 136.8 L737.8 134.9 L739 136.8 L737.8 140.3 L735 143.8 L732.5 147.3 L732 150.8 L730.8 154.3 L729.4 156 L726.9 154.3 L725.2 152.2Z"/>
<path d="M738.5 153.6 L741.8 153.1 L743.6 157.5 L745.4 163.9 L746.9 169 L744.9 171.6 L742.3 167.7 L740.3 161.3Z"/>
<path d="M612.9 178.2 L616.2 177.6 L619.9 177.1 L621 174.8 L623 173.1 L625.8 172.9 L628.6 171.5 L628.3 172.9 L625.2 174.3 L624.1 176.8 L622.4 180.1 L621 183 L619.6 184.6 L621.8 186.3 L620.4 188 L619 189.4 L618.2 187.4 L618.5 184.6 L616.2 184.1 L614.5 186.6 L613.4 186.3 L613.7 184.1 L614.8 181.3 L613.4 179Z"/>
<path d="M626.3 191.1 L628.6 188.6 L631.9 187.2 L632.8 188.6 L632.5 191.9 L633.9 194.2 L636.4 196.4 L634.2 197.3 L633.3 198.7 L631.9 196.7 L631.4 194.2 L628.6 193.1Z"/>
<path d="M753.3 195.9 L755.4 192.4 L757.5 186.8 L758.9 181.9 L760.3 181.2 L762.4 186.1 L765.2 190.3 L769.4 191.7 L770.8 193.1 L768.7 195.9 L769.4 198 L765.9 201.5 L763.1 205 L760.5 207.6 L758.2 205 L756.1 201.5 L754.7 198.7Z"/>
<path d="M708.1 250.6 L710.5 247.8 L709.5 245 L712.6 245.7 L715.4 244.3 L717.9 245 L719.6 242.9 L721 246.4 L722.1 250.6 L721 254.1 L718.9 258 L716.8 257.6 L714 254.1 L710.5 252.7Z"/>
<path d="M749 254.1 L752.6 251 L755.4 245.7 L756.5 241.2 L757.5 244.3 L757.7 251.3 L757.2 255.2 L754 255.2Z"/>
<path d="M633.5 469.8 L636.1 468 L638.6 469.8 L642.5 473.6 L643.2 478.3 L641.2 482.6 L637.9 483.4 L635.3 480.1 L634.3 474.9Z"/>
<path d="M638.6 519.7 L641.2 517.1 L645 517.6 L647.6 519.7 L648.8 524.8 L649.6 529.9 L650.1 534.3 L646.3 535.1 L643.7 532.5 L641.2 527.4 L639.4 523.5Z"/>
<path d="M628.3 531.2 L632.2 529.4 L636 529.9 L637.3 532.5 L636.8 535.8 L633.5 536.9 L630.1 535.1Z"/>
</g>
<g fill="#ffffff" stroke="#1040b0" stroke-width="0.95" stroke-linejoin="round">
<path d="M82.5 710.2 L84.5 708.4 L87.1 709.7 L86.6 711.5 L83.5 711.5Z"/>
<path d="M299.8 115.7 L303.8 113.4 L304.7 114.8 L303 118.8 L301.6 118.8Z"/>
</g>
<!-- legend boxes -->
<g fill="#fff" fill-opacity="0.47" stroke="#888" stroke-width="1">
<rect x="23.5" y="9.5" width="122" height="59.5"/>
<rect x="150.5" y="9.5" width="31" height="59.5"/>
<rect x="209.5" y="9.5" width="87" height="17.5"/>
</g>
<!-- scale bars -->
<defs><linearGradient id="bg" x1="0" y1="0" x2="0" y2="1"><stop offset="0" stop-color="#c0c0c0"/><stop offset="1" stop-color="#ececec"/></linearGradient></defs>
<g stroke="none">
<rect x="28.7" y="31.5" width="112" height="3.8" fill="#fff"/>
<rect x="28.7" y="31.5" width="27.8" height="3.8" fill="url(#bg)"/>
<rect x="84.5" y="31.5" width="28" height="3.8" fill="url(#bg)"/>
<rect x="28.7" y="42.6" width="89.7" height="3.8" fill="#fff"/>
<rect x="73.5" y="42.6" width="44.9" height="3.8" fill="url(#bg)"/>
</g>
<g stroke="#888" stroke-width="1" fill="none">
<path d="M28.2 31.5H141.2M28.2 42.6H118.5"/>
</g>
<g stroke="#111" stroke-width="1" fill="none">
<path d="M28.2 35.4H141.2M28.2 46.5H118.5"/>
<path d="M28.7 31V35.9M56.5 31V35.9M84.5 31V35.9M112.5 31V35.9M140.7 31V35.9M28.7 42.1V47M73.5 42.1V47M118 42.1V47"/>
</g>
<text x="84.2" y="25.6" font-family="'Liberation Serif',serif" font-size="13.6" text-anchor="middle" fill="#000">8 km</text>
<text x="73.3" y="62.2" font-family="'Liberation Serif',serif" font-size="13.6" text-anchor="middle" fill="#000">4 mi</text>
<text x="166.3" y="28.9" font-family="'Liberation Serif',serif" font-size="15" font-style="italic" text-anchor="middle" fill="#222">N</text>
<line x1="155.3" y1="53.8" x2="176.2" y2="53.8" stroke="#777" stroke-width="2"/>
<g stroke="#222" stroke-width="0.9" fill="none">
<line x1="165.5" y1="35.8" x2="165.5" y2="63.9"/>
<line x1="159.9" y1="47.9" x2="171.5" y2="59.5"/><line x1="171.5" y1="47.9" x2="159.9" y2="59.5"/>
<path d="M162.2 39.8 L165.5 35.8 L168.8 39.8"/>
</g>
<!-- projection legend -->
<circle cx="217.4" cy="18.4" r="4.3" fill="#ccc" stroke="#555" stroke-width="0.9"/>
<path d="M224.6 18.5H233 M230.2 15.9L233.2 18.5L230.2 21.1" fill="none" stroke="#333" stroke-width="0.9"/>
<rect x="235.3" y="14.3" width="8.6" height="8.4" fill="#ccc" stroke="#555" stroke-width="0.9"/>
<text x="248.6" y="22.6" font-family="'Liberation Sans',sans-serif" font-size="11" fill="#333">Mercator</text>
<text transform="translate(16.6,79) rotate(-90)" font-family="'Liberation Sans',sans-serif" font-size="12" textLength="70" lengthAdjust="spacingAndGlyphs" fill="#111" stroke="#111" stroke-width="0.2">© d-maps.com</text>
<!-- border -->
<path d="M0 0H781V713H0Z M2 2V711H779V2Z" fill="#000" fill-rule="evenodd"/>
</svg>
</body></html>
